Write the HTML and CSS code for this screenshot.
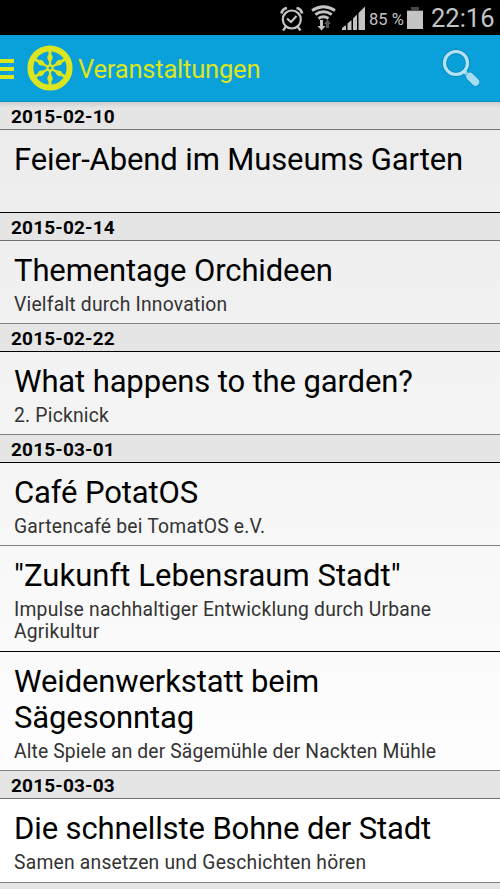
FILE: index.html
```html
<!DOCTYPE html>
<html lang="de">
<head>
<meta charset="utf-8">
<title>Veranstaltungen</title>
<link rel="stylesheet" href="styles.css">
</head>
<body>
<div class="status">
  <svg class="status-icons" width="98" height="35" viewBox="270 0 98 35">
    <g fill="none" stroke="#c4c4c4" stroke-width="2.200">
      <circle cx="291.800" cy="19.500" r="9"/>
      <path d="M287 18.500l4 3.500 5.500-6M286 26.500l-3 4M297.500 26.500l3 4"/>
      <path d="M281.500 13.500q.5-4.500 5.500-5.500M302 13.500q-.5-4.500-5.500-5.500" stroke-width="2.800"/>
      <path d="M312 10.500q11.500-7.500 23 0M315.300 14.500q8.200-5.500 16.400 0M318.500 18.500q5-3.500 10 0" stroke-width="2.800"/>
    </g>
    <path d="M320 20h3v6h2.500l-4 4.500-4-4.500h2.500z" fill="#c4c4c4"/>
    <path d="M326 28h3v-4h2l-3.500-4.500-3.500 4.500h2z" fill="#555"/>
    <path d="M342 30v-2l4-3v5zM347.500 30v-6.500l4-3.500v10zM353 30V18.500l4-4V30zM358.500 30V13l6.500-6.500V30z" fill="#c4c4c4"/>
  </svg>
  <span class="percent">85 %</span>
  <svg class="battery" width="18" height="24" viewBox="0 0 18 24"><path d="M5 1h8v3h4v3H1V4h4z" fill="#484848"/><path d="M1 5h16v18H1z" fill="#c4c4c4"/></svg>
  <span class="clock">22:16</span>
</div>
<header class="bar">
  <span class="menu"><i></i><i></i><i></i></span>
  <svg class="wheel" width="46" height="46" viewBox="-23 -23 46 46">
    <defs><path id="spoke" d="M-1-3L-1.200-6.500L-2.700-10L-2.500-12L-1.500-13V-18H1.500V-13L2.500-12L2.700-10L1.200-6.500L1-3z"/></defs>
    <circle r="19.600" fill="none" stroke="#dce620" stroke-width="6"/>
    <g fill="#dce620"><use href="#spoke"/><use href="#spoke" transform="rotate(60)"/><use href="#spoke" transform="rotate(120)"/><use href="#spoke" transform="rotate(180)"/><use href="#spoke" transform="rotate(240)"/><use href="#spoke" transform="rotate(300)"/></g>
    <circle r="2.600" fill="none" stroke="#dce620" stroke-width="2.200"/>
  </svg>
  <h1>Veranstaltungen</h1>
  <svg class="search" width="42" height="42" viewBox="440 48 42 42">
    <circle cx="456" cy="64" r="11.500" fill="none" stroke="#0787b5" stroke-width="5.500" opacity=".6"/>
    <path d="M464 72l5 5" stroke="#a5dcf0" stroke-width="3.500"/>
    <path d="M470 77.500l5.500 5.500" stroke="#0787b5" stroke-width="9.500" stroke-linecap="round" opacity=".5"/>
    <path d="M470 77.500l5.500 5.500" stroke="#a5dcf0" stroke-width="7.500" stroke-linecap="round"/>
    <circle cx="456" cy="64" r="11.500" fill="none" stroke="#b5e3f3" stroke-width="3.200"/>
  </svg>
</header>
<main>
  <h2 class="date first">2015-02-10</h2>
  <article class="dark"><h3>Feier-Abend im Museums Garten</h3></article>
  <h2 class="date">2015-02-14</h2>
  <article><h3>Thementage Orchideen</h3><p>Vielfalt durch Innovation</p></article>
  <h2 class="date dark">2015-02-22</h2>
  <article><h3>What happens to the garden?</h3><p>2. Picknick</p></article>
  <h2 class="date dark">2015-03-01</h2>
  <article><h3>Café PotatOS</h3><p>Gartencafé bei TomatOS e.V.</p></article>
  <article class="two-sub dark"><h3 class="quoted">"Zukunft Lebensraum Stadt"</h3><p>Impulse nachhaltiger Entwicklung durch Urbane Agrikultur</p></article>
  <article class="two-title"><h3>Weidenwerkstatt beim<br>Sägesonntag</h3><p>Alte Spiele an der Sägemühle der Nackten Mühle</p></article>
  <h2 class="date">2015-03-03</h2>
  <article class="last"><h3>Die schnellste Bohne der Stadt</h3><p>Samen ansetzen und Geschichten hören</p></article>
  <h2 class="date"></h2>
</main>
</body>
</html>
```
FILE: styles.css
```css
* { box-sizing: border-box; }
body { margin: 0; height: 889px; overflow: hidden; font-family: Roboto, sans-serif; color: #000; display: flex; flex-direction: column; background: #fff; }
h1, h2, h3, p { margin: 0; font-weight: 400; }
.status { height: 35px; flex: none; background: #000; color: #c4c4c4; display: flex; align-items: center; padding-left: 270px; white-space: nowrap; }
.status-icons { flex: none; }
.percent { font-size: 16.5px; width: 38px; flex: none; padding: 3px 0 0 1px; }
.battery { flex: none; }
.clock { font-size: 25.5px; margin-left: 7px; padding-top: 1px; }
.bar { height: 67px; flex: none; background: #0aa0d9; border-bottom: 1px solid #078fc6; display: flex; align-items: center; color: #dce620; }
.menu { width: 14px; display: grid; gap: 4px; margin-right: 13px; padding-top: 2px; }
.menu i { height: 4px; background: #dce620; }
.wheel, .search { flex: none; }
.bar h1 { font-size: 25.5px; letter-spacing: -.2px; margin-left: 5px; flex: 1; padding-top: 1px; }
.search { margin-right: 18px; }
main { flex: 1; min-height: 0; overflow: hidden; background: linear-gradient(#ebebeb, #fff 90%); }
.date { height: 28px; padding-left: 11px; border-bottom: 1px solid #707070; background: #e5e5e5; font-size: 19px; letter-spacing: .17px; line-height: 29px; font-weight: 700; }
.first { background: linear-gradient(#cfcfcf, #e5e5e5 6px); }
article { height: 83px; border-bottom: 1px solid #808080; padding: 12px 14px 0; }
.dark { border-bottom-color: #000; }
h3 { font-size: 31px; line-height: 36px; letter-spacing: -.12px; white-space: nowrap; }
.quoted { letter-spacing: .04px; }
p { font-size: 19.3px; letter-spacing: .22px; line-height: 22px; margin-top: 4px; padding-top: 1px; color: #333; }
.two-sub { height: 106px; }
.two-title { height: 119px; }
.two-title p { letter-spacing: .13px; }
.last { height: 84px; }
```
